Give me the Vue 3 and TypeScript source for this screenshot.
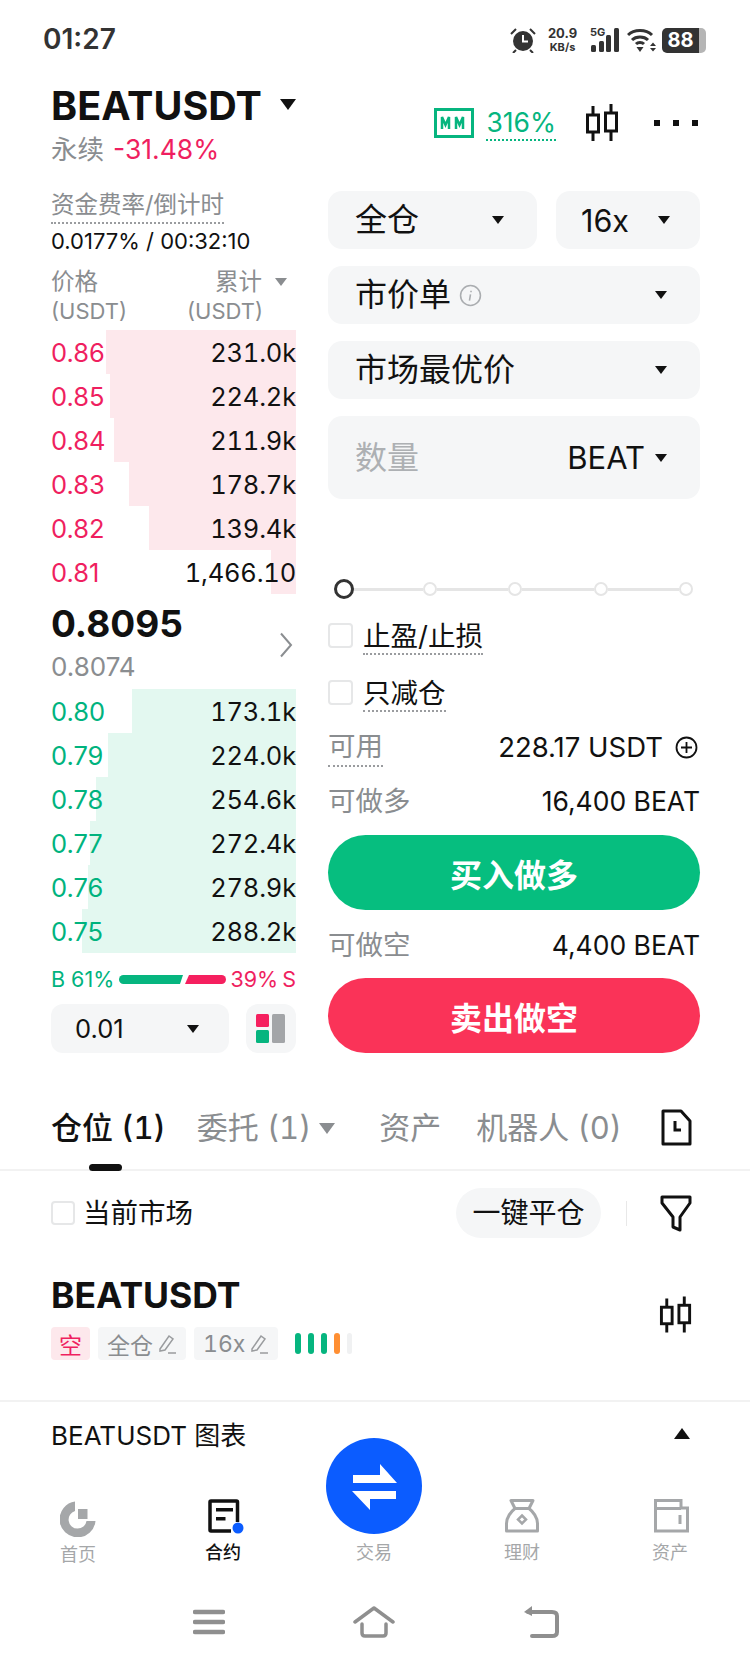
<script setup lang="ts">
interface Level {
  price: string
  total: string
  left: number
}

const asks: Level[] = [
  { price: '0.86', total: '231.0k', left: 106 },
  { price: '0.85', total: '224.2k', left: 110 },
  { price: '0.84', total: '211.9k', left: 114 },
  { price: '0.83', total: '178.7k', left: 129 },
  { price: '0.82', total: '139.4k', left: 149 },
  { price: '0.81', total: '1,466.10', left: 271 },
]

const bids: Level[] = [
  { price: '0.80', total: '173.1k', left: 132 },
  { price: '0.79', total: '224.0k', left: 108 },
  { price: '0.78', total: '254.6k', left: 96 },
  { price: '0.77', total: '272.4k', left: 90 },
  { price: '0.76', total: '278.9k', left: 88 },
  { price: '0.75', total: '288.2k', left: 82 },
]

// the book column starts at x=51 and ends at x=296
const barWidth = (left: number) => ({ width: 296 - left + 'px' })

const sliderStops = [1, 2, 3, 4]
</script>

<template>
  <div class="page">
    <div class="status">
      <span class="time">01:27</span>
      <div class="status-icons">
        <svg width="26" height="26" viewBox="0 0 26 26">
          <circle cx="13" cy="14" r="10" fill="#333" />
          <path d="M13 8v6.500h5" fill="none" stroke="#fff" stroke-width="2" />
          <path d="M1 7l5-5M25 7l-5-5M6 23l-3 3M20 23l3 3" stroke="#333" stroke-width="2" fill="none" />
        </svg>
        <div class="speed"><span>20.9</span><span class="speed-unit">KB/s</span></div>
        <div class="signal">
          <span class="five-g">5G</span>
          <svg width="29" height="26" viewBox="0 0 29 26">
            <rect x="1" y="18" width="5" height="7" rx="1.500" fill="#333" />
            <rect x="9" y="14" width="5" height="11" rx="1.500" fill="#333" />
            <rect x="16" y="8" width="5" height="17" rx="1.500" fill="#333" />
            <rect x="24" y="1" width="5" height="24" rx="1.500" fill="#333" />
          </svg>
        </div>
        <svg class="wifi" width="30" height="26" viewBox="0 0 30 26">
          <path d="M1 8c6-6 18-6 24 0M5 13c4-4 12-4 16 0M9 17c2-2 6-2 8 0" fill="none" stroke="#333" stroke-width="3" />
          <path d="M9.500 20h7l-3.500 5z" fill="#333" />
          <path d="M23 19l3-3.500 3 3.500zM23 21h6l-3 3.500z" fill="#333" />
        </svg>
        <div class="battery"><span class="battery-fill">88</span><span class="battery-rest"></span></div>
      </div>
    </div>

    <div class="header">
      <div class="title-block">
        <div class="title"><span>BEATUSDT</span><i class="caret title-caret"></i></div>
        <div class="subtitle"><span class="perp">永续</span><span class="change">-31.48%</span></div>
      </div>
      <div class="header-tools">
        <svg class="mm" width="40" height="30" viewBox="0 0 40 30">
          <rect x="1.500" y="1.500" width="37" height="27" fill="none" stroke="#06b57f" stroke-width="3" />
          <path d="M8 21V9l3.500 8L15 9v12M22 21V9l3.500 8L29 9v12" fill="none" stroke="#06b57f" stroke-width="2.500" />
        </svg>
        <span class="mm-rate">316%</span>
        <svg class="candle" width="36" height="38" viewBox="0 0 36 38">
          <path d="M8 2v8M8 28v9M26 0v9M26 27v10" stroke="#111" stroke-width="3" />
          <rect x="2.500" y="11" width="11" height="17" fill="none" stroke="#111" stroke-width="3" />
          <rect x="20.500" y="9" width="11" height="18" fill="none" stroke="#111" stroke-width="3" />
        </svg>
        <div class="dots"><i></i><i></i><i></i></div>
      </div>
    </div>

    <div class="trade">
      <div class="book">
        <div class="funding-label"><span>资金费率/倒计时</span></div>
        <div class="funding-value">0.0177% / 00:32:10</div>
        <div class="book-head">
          <div class="head-row"><span>价格</span><span class="head-total">累计<i class="caret grey-caret"></i></span></div>
          <div class="head-row unit"><span>(USDT)</span><span class="unit-total">(USDT)</span></div>
        </div>
        <div class="levels">
          <div v-for="a in asks" :key="a.price" class="level">
            <div class="depth ask-depth" :style="barWidth(a.left)"></div>
            <span class="price ask">{{ a.price }}</span>
            <span class="total">{{ a.total }}</span>
          </div>
        </div>
        <div class="mid">
          <div>
            <div class="last">0.8095</div>
            <div class="mark">0.8074</div>
          </div>
          <svg class="chevron" width="14" height="26" viewBox="0 0 14 26">
            <path d="M2 1.500l10 11.500-10 11.500" fill="none" stroke="#8b8e91" stroke-width="2" />
          </svg>
        </div>
        <div class="levels">
          <div v-for="b in bids" :key="b.price" class="level">
            <div class="depth bid-depth" :style="barWidth(b.left)"></div>
            <span class="price bid">{{ b.price }}</span>
            <span class="total">{{ b.total }}</span>
          </div>
        </div>
        <div class="ratio">
          <span class="bid">B 61%</span>
          <svg width="107" height="9" viewBox="0 0 107 9">
            <path d="M4.500 0H64l-3 9H4.500a4.500 4.500 0 0 1 0-9z" fill="#06b57f" />
            <path d="M70 0h32.500a4.500 4.500 0 0 1 0 9H66z" fill="#f5205f" />
          </svg>
          <span class="ask">39% S</span>
        </div>
        <div class="book-tools">
          <div class="tick"><span>0.01</span><i class="caret"></i></div>
          <div class="layout-btn">
            <svg width="30" height="30" viewBox="0 0 30 30">
              <rect x="0" y="0" width="13" height="13" rx="1.500" fill="#f5205f" />
              <rect x="0" y="16" width="13" height="13" rx="1.500" fill="#06b57f" />
              <rect x="16" y="0" width="13" height="29" rx="1.500" fill="#a3a5a8" />
            </svg>
          </div>
        </div>
      </div>

      <div class="form">
        <div class="form-row">
          <div class="select margin-mode"><span class="cjk-big">全仓</span><i class="caret"></i></div>
          <div class="select leverage"><span class="lev-text">16x</span><i class="caret"></i></div>
        </div>
        <div class="select">
          <span class="order-type">
            <span class="cjk-big">市价单</span>
            <svg width="23" height="23" viewBox="0 0 22 22">
              <circle cx="11" cy="11" r="9.500" fill="none" stroke="#aaadb0" stroke-width="1.500" />
              <path d="M11.500 6.500v1.500M11 10l-1 6" stroke="#aaadb0" stroke-width="1.500" fill="none" />
            </svg>
          </span>
          <i class="caret"></i>
        </div>
        <div class="select"><span class="cjk-big">市场最优价</span><i class="caret"></i></div>
        <div class="select qty">
          <span class="cjk-big placeholder">数量</span>
          <span class="qty-unit"><span>BEAT</span><i class="caret"></i></span>
        </div>

        <div class="slider">
          <i class="stop-main"></i>
          <template v-for="s in sliderStops" :key="s">
            <i class="track"></i>
            <i class="stop"></i>
          </template>
        </div>

        <div class="check-row first">
          <i class="box"></i><span class="check-label">止盈/止损</span>
        </div>
        <div class="check-row">
          <i class="box"></i><span class="check-label">只减仓</span>
        </div>

        <div class="info-row avail">
          <span class="info-label dotted">可用</span>
          <span class="info-value with-icon">
            228.17 USDT
            <svg width="23" height="23" viewBox="0 0 23 23">
              <circle cx="11.500" cy="11.500" r="10" fill="none" stroke="#111" stroke-width="1.800" />
              <path d="M11.500 6v11M6 11.500h11" stroke="#111" stroke-width="1.800" />
            </svg>
          </span>
        </div>
        <div class="info-row long-row">
          <span class="info-label">可做多</span>
          <span class="info-value right-value">16,400 BEAT</span>
        </div>
        <button class="action buy">买入做多</button>
        <div class="info-row short-row">
          <span class="info-label">可做空</span>
          <span class="info-value right-value">4,400 BEAT</span>
        </div>
        <button class="action sell">卖出做空</button>
      </div>
    </div>

    <div class="tabs">
      <span class="tab active">仓位 (1)<i class="tab-mark"></i></span>
      <span class="tab orders">委托 (1)<i class="caret tab-caret"></i></span>
      <span class="tab assets">资产</span>
      <span class="tab bots">机器人 (0)</span>
      <svg class="tab-doc" width="31" height="37" viewBox="0 0 31 37">
        <path d="M2 2h18l9 10v23H2z" fill="none" stroke="#111" stroke-width="3" stroke-linejoin="round" />
        <path d="M14 12v9h6" fill="none" stroke="#111" stroke-width="3" />
      </svg>
    </div>

    <div class="filter-row">
      <i class="box small-box"></i>
      <span class="market">当前市场</span>
      <span class="close-all">一键平仓</span>
      <i class="filter-div"></i>
      <svg width="32" height="37" viewBox="0 0 32 37">
        <path d="M2 2h28v6L20 22v13l-7-3V22L2 8z" fill="none" stroke="#111" stroke-width="3" stroke-linejoin="round" />
      </svg>
    </div>

    <div class="position">
      <div>
        <div class="pos-name">BEATUSDT</div>
        <div class="pos-tags">
          <span class="tag tag-short">空</span>
          <span class="tag">全仓
            <svg width="20" height="20" viewBox="0 0 20 20"><path d="M3 15L12 2l4 3-8 11-5 1zM11 19h8" fill="none" stroke="#9a9c9f" stroke-width="1.500" /></svg>
          </span>
          <span class="tag">16x
            <svg width="20" height="20" viewBox="0 0 20 20"><path d="M3 15L12 2l4 3-8 11-5 1zM11 19h8" fill="none" stroke="#9a9c9f" stroke-width="1.500" /></svg>
          </span>
          <span class="risk">
            <i class="g"></i><i class="g"></i><i class="g"></i><i class="o"></i><i class="e"></i>
          </span>
        </div>
      </div>
      <svg width="35" height="38" viewBox="0 0 36 38">
        <path d="M8 2v8M8 28v9M26 0v9M26 27v10" stroke="#111" stroke-width="3" />
        <rect x="2.500" y="11" width="11" height="17" fill="none" stroke="#111" stroke-width="3" />
        <rect x="20.500" y="9" width="11" height="18" fill="none" stroke="#111" stroke-width="3" />
      </svg>
    </div>

    <div class="chart-row">
      <span>BEATUSDT 图表</span>
      <i class="caret up"></i>
    </div>

    <div class="nav">
      <div class="nav-item">
        <svg width="36" height="38" viewBox="0 0 36 38">
          <path d="M15 2.500A18 18 0 1 0 35.500 22H26.500A9 9 0 1 1 15 12z" fill="#a5a7a9" />
          <rect x="18" y="10" width="9.500" height="10" fill="#a5a7a9" />
        </svg>
        <span class="home-label">首页</span>
      </div>
      <div class="nav-item on">
        <svg class="contract" width="44" height="38" viewBox="0 0 44 38">
          <path d="M36.500 23V3a1 1 0 0 0-1-1H10a1 1 0 0 0-1 1v28a1 1 0 0 0 1 1h20" fill="none" stroke="#111" stroke-width="3.500" />
          <path d="M15 9h17v3.500H15zM15 18h9.500v3.500H15z" fill="#111" />
          <circle cx="37" cy="29" r="5.500" fill="#0b5cff" />
        </svg>
        <span>合约</span>
      </div>
      <div class="nav-item">
        <div class="nav-gap"></div>
        <span>交易</span>
      </div>
      <div class="nav-item">
        <svg width="36" height="38" viewBox="0 0 36 38">
          <path d="M7 1.500h22l-4 8c4 3 8.500 9 8.500 15v7.500h-31v-7.500c0-6 4.500-12 8.500-15z" fill="none" stroke="#a5a7a9" stroke-width="3" stroke-linejoin="round" />
          <path d="M11 9.500h14" stroke="#a5a7a9" stroke-width="3" />
          <path d="M18 16.500l4 4-4 4-4-4z" fill="none" stroke="#a5a7a9" stroke-width="2.500" />
        </svg>
        <span>理财</span>
      </div>
      <div class="nav-item">
        <svg width="38" height="38" viewBox="0 0 38 38">
          <path d="M4.500 1.500H30V9h6.500v23h-32zM4.500 9.500H30" fill="none" stroke="#a5a7a9" stroke-width="3" />
          <path d="M29 16v9" stroke="#a5a7a9" stroke-width="3" />
        </svg>
        <span>资产</span>
      </div>
    </div>

    <div class="trade-fab">
      <svg width="96" height="96" viewBox="0 0 96 96">
        <circle cx="48" cy="48" r="48" fill="#0b5cff" />
        <path d="M27 37h27V26l17 19H27zM70 53H26l18 19V61h26z" fill="#fff" />
      </svg>
    </div>

    <div class="sysbar">
      <svg width="32" height="26" viewBox="0 0 32 26">
        <path d="M2 3h28M2 13h28M2 23h28" stroke="#8f8f8f" stroke-width="4.500" stroke-linecap="round" />
      </svg>
      <svg width="42" height="32" viewBox="0 0 42 32">
        <path d="M2 16L21 2l19 14M9 18v9c0 2 1 3 3 3h18c2 0 3-1 3-3v-9" fill="none" stroke="#8f8f8f" stroke-width="3.500" stroke-linecap="round" stroke-linejoin="round" />
      </svg>
      <svg width="36" height="32" viewBox="0 0 36 32">
        <path d="M5 6h24c3 0 5 1 5 4v16c0 3-2 4-5 4H9" fill="none" stroke="#8f8f8f" stroke-width="4" stroke-linecap="round" />
        <path d="M9 0v10L1 6z" fill="#8f8f8f" />
      </svg>
    </div>
  </div>
</template>

<style scoped>
.page {
  position: relative;
  width: 750px;
  height: 1667px;
  overflow: hidden;
  background: #fff;
  color: #111;
  font-family: Inter, "Noto Sans CJK SC", sans-serif;
  display: flex;
  flex-direction: column;
}

i {
  display: block;
  font-style: normal;
}

.caret {
  width: 0;
  height: 0;
  border-left: 6px solid transparent;
  border-right: 6px solid transparent;
  border-top: 8px solid #111;
}

.caret.up {
  border-top: 0;
  border-bottom: 11px solid #111;
  border-left-width: 8.500px;
  border-right-width: 8.500px;
}

/* status bar */
.status {
  height: 78px;
  flex: none;
  display: flex;
  align-items: flex-start;
  justify-content: space-between;
  padding: 24px 44px 0 43px;
  box-sizing: border-box;
}

.time {
  font-size: 28px;
  line-height: 30px;
  font-weight: 600;
  color: #333;
}

.status-icons {
  display: flex;
  align-items: center;
  margin-top: 2px;
  color: #333;
}

.speed {
  display: flex;
  flex-direction: column;
  align-items: center;
  margin-left: 11px;
  width: 31px;
  font-size: 13px;
  line-height: 14px;
  font-weight: 700;
}

.speed-unit {
  font-size: 11px;
}

.signal {
  position: relative;
  width: 29px;
  margin-left: 12px;
}

.signal svg {
  display: block;
}

.five-g {
  position: absolute;
  left: 0;
  top: -1px;
  font-size: 11px;
  line-height: 12px;
  font-weight: 700;
}

.wifi {
  margin-left: 8px;
}

.battery {
  display: flex;
  align-items: center;
  margin-left: 5px;
}

.battery-fill {
  width: 37px;
  height: 25px;
  border-radius: 5px 0 0 5px;
  background: #333;
  color: #fff;
  font-size: 20px;
  line-height: 25px;
  font-weight: 700;
  text-align: center;
}

.battery-rest {
  width: 7px;
  height: 25px;
  border-radius: 0 5px 5px 0;
  background: #b5b5b5;
}

/* header */
.header {
  height: 113px;
  flex: none;
  display: flex;
  justify-content: space-between;
  padding: 7px 52px 0 51px;
  box-sizing: border-box;
}

.title {
  display: flex;
  align-items: center;
  font-size: 39.500px;
  line-height: 42px;
  font-weight: 700;
}

.title-caret {
  margin-left: 18px;
  margin-bottom: 3px;
  border-left-width: 8.500px;
  border-right-width: 8.500px;
  border-top-width: 11px;
}

.subtitle {
  font-size: 26.500px;
  line-height: 44px;
}

.perp {
  color: #8a8d90;
}

.change {
  margin-left: 9px;
  color: #ef1f5f;
}

.header-tools {
  display: flex;
  align-items: center;
  height: 56px;
  padding-top: 10px;
}

.mm-rate {
  margin-left: 12px;
  color: #06b57f;
  font-size: 26.500px;
  line-height: 34px;
  border-bottom: 2px dotted #06b57f;
}

.candle {
  margin-left: 29px;
}

.dots {
  display: flex;
  gap: 13px;
  margin-left: 33px;
}

.dots i {
  width: 6px;
  height: 6px;
  background: #111;
}

/* trade area */
.trade {
  height: 879px;
  flex: none;
  display: flex;
  padding-left: 51px;
}

.book {
  width: 245px;
  flex: none;
}

.funding-label {
  height: 36px;
  font-size: 23.500px;
  line-height: 28px;
  color: #8a8d90;
}

.funding-label span {
  display: inline-block;
  height: 31px;
  border-bottom: 2px dotted #9a9c9f;
}

.funding-value {
  font-size: 22px;
  line-height: 28px;
  white-space: nowrap;
}

.book-head {
  margin-top: 12px;
  height: 63px;
  color: #8a8d90;
}

.head-row {
  display: flex;
  justify-content: space-between;
  font-size: 23.500px;
  line-height: 30px;
}

.head-total {
  display: flex;
  align-items: center;
  gap: 13px;
  padding-right: 9px;
}

.grey-caret {
  border-top-color: #8a8d90;
  border-left-width: 6.500px;
  border-right-width: 6.500px;
  border-top-width: 8px;
}

.unit {
  font-size: 22px;
  line-height: 28px;
}

.unit-total {
  padding-right: 33px;
}

.levels {
  display: flex;
  flex-direction: column;
}

.level {
  position: relative;
  height: 44px;
  display: flex;
  align-items: center;
  justify-content: space-between;
  font-size: 25.500px;
}

.depth {
  position: absolute;
  top: 0;
  bottom: 0;
  right: 0;
}

.ask-depth {
  background: #fde8ec;
}

.bid-depth {
  background: #e3f8f0;
}

.price,
.total {
  position: relative;
}

.total {
  white-space: nowrap;
  font-variant-numeric: tabular-nums;
  letter-spacing: -0.2px;
}

.ask {
  color: #ef1f5f;
}

.bid {
  color: #00b37e;
}

.mid {
  height: 95px;
  display: flex;
  justify-content: space-between;
  align-items: flex-start;
  box-sizing: border-box;
  padding-top: 9px;
}

.last {
  font-size: 37px;
  line-height: 42px;
  font-weight: 700;
}

.mark {
  margin-top: 6px;
  font-size: 26px;
  line-height: 32px;
  color: #8a8d90;
}

.chevron {
  margin-top: 29px;
  margin-right: 3px;
}

.ratio {
  height: 26px;
  margin-top: 13px;
  display: flex;
  align-items: center;
  justify-content: space-between;
  font-size: 21.500px;
  line-height: 26px;
  white-space: nowrap;
}

.ratio .ask {
  word-spacing: -2px;
}

.book-tools {
  margin-top: 12px;
  display: flex;
  justify-content: space-between;
}

.tick {
  width: 178px;
  height: 49px;
  border-radius: 12px;
  background: #f5f6f7;
  display: flex;
  align-items: center;
  justify-content: space-between;
  box-sizing: border-box;
  padding: 0 30px 0 24px;
  font-size: 25.500px;
}

.layout-btn {
  width: 50px;
  height: 49px;
  border-radius: 12px;
  background: #f5f6f7;
  display: flex;
  align-items: center;
  justify-content: center;
}

/* order form */
.form {
  width: 372px;
  margin-left: 32px;
  display: flex;
  flex-direction: column;
}

.form-row {
  display: flex;
  gap: 19px;
}

.select {
  height: 58px;
  margin-bottom: 17px;
  flex: none;
  display: flex;
  align-items: center;
  justify-content: space-between;
  padding: 0 33px 0 27px;
  box-sizing: border-box;
  background: #f5f6f7;
  border-radius: 14px;
}

.margin-mode {
  width: 209px;
}

.leverage {
  width: 144px;
  padding: 0 30px 0 25px;
}

.lev-text {
  font-size: 30.500px;
}

.cjk-big {
  font-size: 32px;
  line-height: 40px;
}

.order-type {
  display: flex;
  align-items: center;
  gap: 8px;
}

.qty {
  height: 83px;
  margin-bottom: 0;
}

.placeholder {
  color: #adb0b3;
}

.qty-unit {
  display: flex;
  align-items: center;
  gap: 10px;
  font-size: 31px;
}

.slider {
  margin-top: 80px;
  height: 20px;
  display: flex;
  align-items: center;
  padding: 0 7px 0 6px;
}

.stop-main {
  position: relative;
  z-index: 1;
  width: 20px;
  height: 20px;
  margin-right: -3px;
  box-sizing: border-box;
  border: 3.500px solid #333;
  border-radius: 50%;
  background: #fff;
  flex: none;
}

.track {
  flex: 1;
  height: 3px;
  background: #e5e5e5;
}

.stop {
  width: 14px;
  height: 14px;
  box-sizing: border-box;
  border: 2px solid #e5e5e5;
  border-radius: 50%;
  flex: none;
}

.check-row {
  height: 57px;
  display: flex;
  align-items: flex-start;
}

.check-row.first {
  margin-top: 24px;
}

.box {
  width: 25px;
  height: 25px;
  box-sizing: border-box;
  border: 2px solid #e6e7e8;
  border-radius: 4px;
  flex: none;
}

.check-label {
  margin-left: 10px;
  margin-top: -4px;
  font-size: 27.500px;
  line-height: 34px;
  border-bottom: 2px dotted #9a9c9f;
}

.info-row {
  display: flex;
  align-items: center;
  justify-content: space-between;
  height: 36px;
}

.avail {
  margin-top: -8px;
}

.info-label {
  font-size: 27.500px;
  line-height: 34px;
  color: #8a8d90;
}

.dotted {
  border-bottom: 2px dotted #9a9c9f;
  padding-bottom: 2px;
  margin-top: 2px;
}

.info-value {
  display: flex;
  align-items: center;
  gap: 11px;
  font-size: 27px;
}

.with-icon {
  font-size: 27.500px;
  gap: 12px;
  padding-right: 2px;
}

.right-value {
  font-size: 26.500px;
}

.long-row {
  margin-top: 18px;
}

.action {
  display: block;
  width: 372px;
  height: 75px;
  flex: none;
  border: none;
  border-radius: 38px;
  color: #fff;
  font-family: inherit;
  font-size: 32px;
  font-weight: 700;
  padding: 0;
}

.buy {
  margin-top: 16px;
  background: #06be7f;
}

.short-row {
  margin-top: 17px;
}

.sell {
  margin-top: 15px;
  background: #fa3358;
}

/* tabs */
.tabs {
  height: 101px;
  flex: none;
  display: flex;
  align-items: flex-start;
  padding: 37px 58px 0 51px;
  box-sizing: border-box;
  border-bottom: 2px solid #f2f2f2;
  font-size: 31px;
  line-height: 42px;
  color: #8a8d90;
  font-variant-numeric: tabular-nums;
}

.tab {
  position: relative;
  display: flex;
  align-items: center;
  white-space: nowrap;
}

.tab.active {
  color: #111;
  font-weight: 500;
}

.tab-mark {
  position: absolute;
  left: 38px;
  top: 57px;
  width: 33px;
  height: 7px;
  border-radius: 4px;
  background: #111;
}

.orders {
  margin-left: 31px;
}

.tab-caret {
  margin-left: 8px;
  border-top-color: #8a8d90;
  border-left-width: 8px;
  border-right-width: 8px;
  border-top-width: 11px;
}

.assets {
  margin-left: 44px;
}

.bots {
  margin-left: 35px;
}

.tab-doc {
  margin-left: auto;
  margin-top: 2px;
}

.filter-row {
  height: 84px;
  flex: none;
  display: flex;
  align-items: center;
  padding: 0 58px 0 51px;
  box-sizing: border-box;
}

.small-box {
  width: 24px;
  height: 24px;
}

.market {
  margin-left: 8px;
  margin-top: -4px;
  font-size: 27.500px;
}

.close-all {
  margin-left: auto;
  width: 145px;
  height: 50px;
  border-radius: 25px;
  background: #f5f6f7;
  font-size: 28px;
  line-height: 50px;
  text-align: center;
}

.filter-div {
  width: 1px;
  height: 25px;
  margin: 0 33px 0 25px;
  background: #e8e8e8;
}

.position {
  height: 147px;
  flex: none;
  display: flex;
  justify-content: space-between;
  padding: 0 56px 0 51px;
  box-sizing: border-box;
  border-bottom: 2px solid #f2f2f2;
}

.position > svg {
  margin-top: 41px;
}

.pos-name {
  margin-top: 20px;
  font-size: 35.500px;
  line-height: 42px;
  font-weight: 700;
}

.pos-tags {
  margin-top: 10px;
  display: flex;
  align-items: center;
  gap: 8px;
}

.tag {
  height: 33px;
  padding: 0 9px;
  display: flex;
  align-items: center;
  gap: 4px;
  border-radius: 4px;
  background: #f5f6f7;
  color: #8a8d90;
  font-size: 23px;
  font-variant-numeric: tabular-nums;
}

.tag-short {
  width: 39px;
  box-sizing: border-box;
  justify-content: center;
  padding: 0;
  background: #fde8ec;
  color: #ef1f5f;
}

.risk {
  display: flex;
  gap: 7px;
  margin-left: 9px;
}

.risk i {
  width: 6px;
  height: 21px;
  border-radius: 3px;
}

.risk .g {
  background: #06b57f;
}

.risk .o {
  background: #ff8f33;
}

.risk .e {
  background: #f0f1f2;
  width: 5px;
}

.chart-row {
  height: 68px;
  flex: none;
  display: flex;
  align-items: center;
  justify-content: space-between;
  padding: 0 60px 5px 51px;
  box-sizing: border-box;
  font-size: 26px;
}

.nav {
  height: 129px;
  flex: none;
  display: flex;
  padding: 29px 6px 0 4px;
  box-sizing: border-box;
}

.nav-item {
  width: 148px;
  display: flex;
  flex-direction: column;
  align-items: center;
  color: #a5a7a9;
  font-size: 18px;
  line-height: 24px;
}

.nav-item > svg,
.nav-gap {
  height: 38px;
  margin-bottom: 4px;
  flex: none;
}

.nav-item.on {
  color: #111;
  font-weight: 500;
  margin-left: -3px;
  margin-right: 3px;
}

.home-label {
  margin-top: 2px;
}

.trade-fab {
  position: absolute;
  left: 326px;
  top: 1438px;
  width: 96px;
  height: 96px;
}

.trade-fab svg {
  display: block;
}

.sysbar {
  height: 46px;
  flex: none;
  display: flex;
  align-items: center;
  padding: 0 191px 0 193px;
  box-sizing: border-box;
  justify-content: space-between;
}
</style>
